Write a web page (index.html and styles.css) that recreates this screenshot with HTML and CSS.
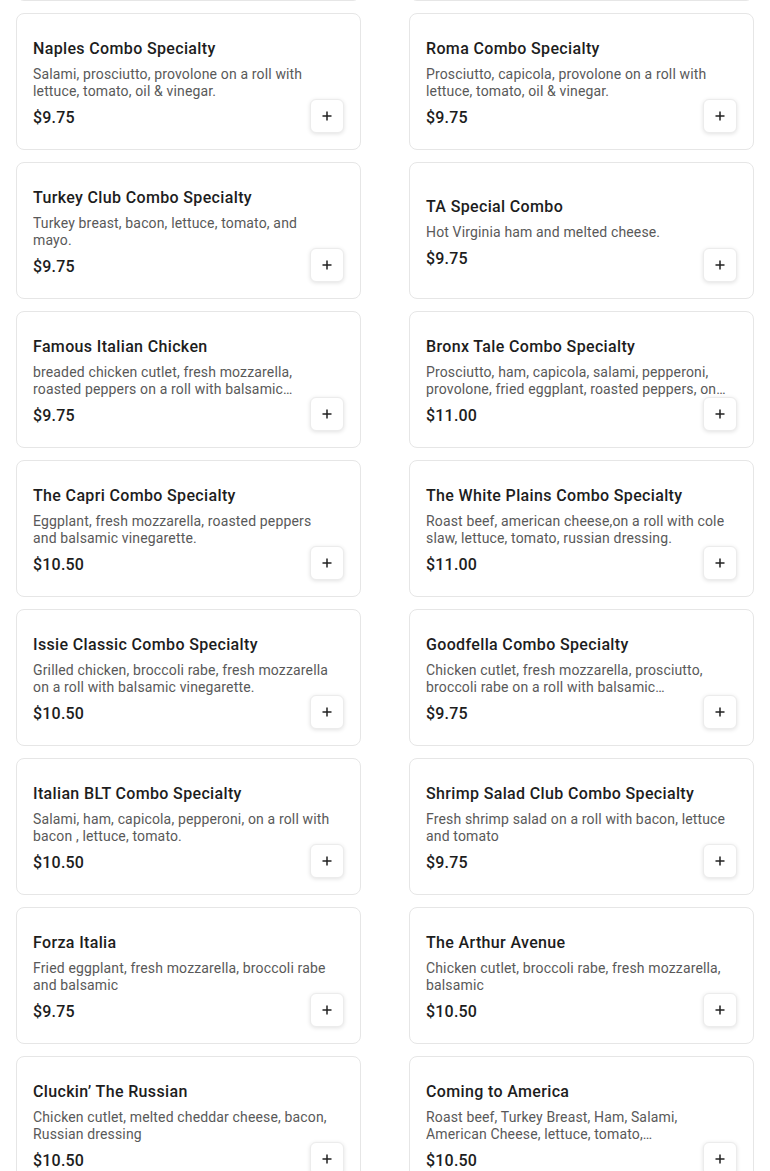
FILE: index.html
```html
<!DOCTYPE html>
<html>
  <head>
    <title>Combo Specialties</title>
    <link rel="stylesheet" href="styles.css">
  </head>

  <body>
    <div class="menu-grid">
      <!-- row scrolled above the window -->
      <div class="menu-card"></div>
      <div class="menu-card"></div>

      <div class="menu-card">
        <div class="item-info">
          <h3 class="item-title">Naples Combo Specialty</h3>
          <p class="item-desc">Salami, prosciutto, provolone on a roll with lettuce, tomato, oil &amp; vinegar.</p>
          <div class="item-price">$9.75</div>
        </div>
        <button class="add-button" aria-label="Add"><svg viewBox="0 0 10 10"><path d="M5 0.5v9M0.5 5h9"/></svg></button>
      </div>
      <div class="menu-card">
        <div class="item-info">
          <h3 class="item-title">Roma Combo Specialty</h3>
          <p class="item-desc">Prosciutto, capicola, provolone on a roll with lettuce, tomato, oil &amp; vinegar.</p>
          <div class="item-price">$9.75</div>
        </div>
        <button class="add-button" aria-label="Add"><svg viewBox="0 0 10 10"><path d="M5 0.5v9M0.5 5h9"/></svg></button>
      </div>

      <div class="menu-card">
        <div class="item-info">
          <h3 class="item-title">Turkey Club Combo Specialty</h3>
          <p class="item-desc">Turkey breast, bacon, lettuce, tomato, and mayo.</p>
          <div class="item-price">$9.75</div>
        </div>
        <button class="add-button" aria-label="Add"><svg viewBox="0 0 10 10"><path d="M5 0.5v9M0.5 5h9"/></svg></button>
      </div>
      <div class="menu-card">
        <div class="item-info">
          <h3 class="item-title">TA Special Combo</h3>
          <p class="item-desc">Hot Virginia ham and melted cheese.</p>
          <div class="item-price">$9.75</div>
        </div>
        <button class="add-button" aria-label="Add"><svg viewBox="0 0 10 10"><path d="M5 0.5v9M0.5 5h9"/></svg></button>
      </div>

      <div class="menu-card">
        <div class="item-info">
          <h3 class="item-title">Famous Italian Chicken</h3>
          <p class="item-desc">breaded chicken cutlet, fresh mozzarella, roasted peppers on a roll with balsamic vinegarette.</p>
          <div class="item-price">$9.75</div>
        </div>
        <button class="add-button" aria-label="Add"><svg viewBox="0 0 10 10"><path d="M5 0.5v9M0.5 5h9"/></svg></button>
      </div>
      <div class="menu-card">
        <div class="item-info">
          <h3 class="item-title">Bronx Tale Combo Specialty</h3>
          <p class="item-desc">Prosciutto, ham, capicola, salami, pepperoni, provolone, fried eggplant, roasted peppers, on a roll with oil &amp; vinegar.</p>
          <div class="item-price">$11.00</div>
        </div>
        <button class="add-button" aria-label="Add"><svg viewBox="0 0 10 10"><path d="M5 0.5v9M0.5 5h9"/></svg></button>
      </div>

      <div class="menu-card">
        <div class="item-info">
          <h3 class="item-title">The Capri Combo Specialty</h3>
          <p class="item-desc">Eggplant, fresh mozzarella, roasted peppers and balsamic vinegarette.</p>
          <div class="item-price">$10.50</div>
        </div>
        <button class="add-button" aria-label="Add"><svg viewBox="0 0 10 10"><path d="M5 0.5v9M0.5 5h9"/></svg></button>
      </div>
      <div class="menu-card">
        <div class="item-info">
          <h3 class="item-title">The White Plains Combo Specialty</h3>
          <p class="item-desc">Roast beef, american cheese,on a roll with cole slaw, lettuce, tomato, russian dressing.</p>
          <div class="item-price">$11.00</div>
        </div>
        <button class="add-button" aria-label="Add"><svg viewBox="0 0 10 10"><path d="M5 0.5v9M0.5 5h9"/></svg></button>
      </div>

      <div class="menu-card">
        <div class="item-info">
          <h3 class="item-title">Issie Classic Combo Specialty</h3>
          <p class="item-desc">Grilled chicken, broccoli rabe, fresh mozzarella on a roll with balsamic vinegarette.</p>
          <div class="item-price">$10.50</div>
        </div>
        <button class="add-button" aria-label="Add"><svg viewBox="0 0 10 10"><path d="M5 0.5v9M0.5 5h9"/></svg></button>
      </div>
      <div class="menu-card">
        <div class="item-info">
          <h3 class="item-title">Goodfella Combo Specialty</h3>
          <p class="item-desc">Chicken cutlet, fresh mozzarella, prosciutto, broccoli rabe on a roll with balsamic vinegarette.</p>
          <div class="item-price">$9.75</div>
        </div>
        <button class="add-button" aria-label="Add"><svg viewBox="0 0 10 10"><path d="M5 0.5v9M0.5 5h9"/></svg></button>
      </div>

      <div class="menu-card">
        <div class="item-info">
          <h3 class="item-title">Italian BLT Combo Specialty</h3>
          <p class="item-desc">Salami, ham, capicola, pepperoni, on a roll with bacon , lettuce, tomato.</p>
          <div class="item-price">$10.50</div>
        </div>
        <button class="add-button" aria-label="Add"><svg viewBox="0 0 10 10"><path d="M5 0.5v9M0.5 5h9"/></svg></button>
      </div>
      <div class="menu-card">
        <div class="item-info">
          <h3 class="item-title">Shrimp Salad Club Combo Specialty</h3>
          <p class="item-desc">Fresh shrimp salad on a roll with bacon, lettuce and tomato</p>
          <div class="item-price">$9.75</div>
        </div>
        <button class="add-button" aria-label="Add"><svg viewBox="0 0 10 10"><path d="M5 0.5v9M0.5 5h9"/></svg></button>
      </div>

      <div class="menu-card">
        <div class="item-info">
          <h3 class="item-title">Forza Italia</h3>
          <p class="item-desc">Fried eggplant, fresh mozzarella, broccoli rabe and balsamic</p>
          <div class="item-price">$9.75</div>
        </div>
        <button class="add-button" aria-label="Add"><svg viewBox="0 0 10 10"><path d="M5 0.5v9M0.5 5h9"/></svg></button>
      </div>
      <div class="menu-card">
        <div class="item-info">
          <h3 class="item-title">The Arthur Avenue</h3>
          <p class="item-desc">Chicken cutlet, broccoli rabe, fresh mozzarella, balsamic</p>
          <div class="item-price">$10.50</div>
        </div>
        <button class="add-button" aria-label="Add"><svg viewBox="0 0 10 10"><path d="M5 0.5v9M0.5 5h9"/></svg></button>
      </div>

      <div class="menu-card">
        <div class="item-info">
          <h3 class="item-title">Cluckin’ The Russian</h3>
          <p class="item-desc">Chicken cutlet, melted cheddar cheese, bacon, Russian dressing</p>
          <div class="item-price">$10.50</div>
        </div>
        <button class="add-button" aria-label="Add"><svg viewBox="0 0 10 10"><path d="M5 0.5v9M0.5 5h9"/></svg></button>
      </div>
      <div class="menu-card">
        <div class="item-info">
          <h3 class="item-title">Coming to America</h3>
          <p class="item-desc">Roast beef, Turkey Breast, Ham, Salami, American Cheese, lettuce, tomato,<br>russian dressing.</p>
          <div class="item-price">$10.50</div>
        </div>
        <button class="add-button" aria-label="Add"><svg viewBox="0 0 10 10"><path d="M5 0.5v9M0.5 5h9"/></svg></button>
      </div>
    </div>
  </body>
</html>
```

FILE: styles.css
```css
body {
  margin: 0;
  background-color: #fff;
  font-family: Roboto, "Liberation Sans", Arial, sans-serif;
  color: #1d1d1d;
}

/* two column list of menu items, scrolled a bit */
.menu-grid {
  display: grid;
  grid-template-columns: 345px 345px;
  column-gap: 48px;
  row-gap: 12px;
  padding: 0 16px;
  margin-top: -136px;
}

/* Style the cards */
.menu-card {
  display: grid;
  height: 137px;
  box-sizing: border-box;
  padding: 16px;
  border: 1px solid #e6e6e6;
  border-radius: 8px;
  background-color: #fff;
}

.item-info {
  grid-area: 1 / 1;
  align-self: center;
  padding-top: 4px;
  padding-right: 10px;
}

.item-title {
  margin: 0 0 6px 0;
  font-size: 16px;
  line-height: 22px;
  font-weight: 500;
  letter-spacing: 0.35px;
  color: #1d1d1d;
}

.item-desc {
  margin: 0 0 7px 0;
  font-size: 14px;
  line-height: 17px;
  letter-spacing: 0.15px;
  color: #595959;
  display: -webkit-box;
  -webkit-line-clamp: 2;
  -webkit-box-orient: vertical;
  overflow: hidden;
}

.item-price {
  font-size: 16px;
  line-height: 22px;
  font-weight: 500;
  letter-spacing: 0.2px;
  color: #1d1d1d;
}

/* the little add button */
.add-button {
  grid-area: 1 / 1;
  align-self: end;
  justify-self: end;
  display: flex;
  align-items: center;
  justify-content: center;
  width: 34px;
  height: 34px;
  padding: 0;
  border: 1px solid #ececec;
  border-radius: 6px;
  background-color: #fff;
  box-shadow: 0 1px 4px rgba(0, 0, 0, 0.12);
  cursor: pointer;
}

.add-button svg {
  width: 10px;
  height: 10px;
  stroke: #222;
  stroke-width: 1.5;
  fill: none;
}
```
